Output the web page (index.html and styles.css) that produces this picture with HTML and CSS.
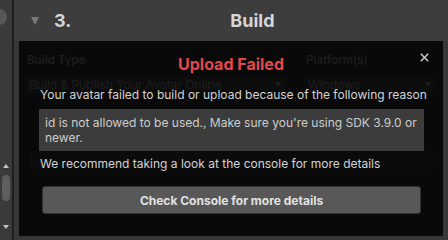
FILE: index.html
```html
<!DOCTYPE html>
<html>
<head>
<meta charset="utf-8">
<link rel="stylesheet" href="styles.css">
</head>
<body>
<div class="app">
  <aside class="scroll">
    <span class="knob"></span>
    <div class="track">
      <span class="arrow up"></span>
      <span class="thumb"></span>
      <span class="arrow down"></span>
    </div>
  </aside>
  <main class="main">
    <header class="section-head">
      <span class="caret"></span>
      <span class="num">3.</span>
      <span class="title">Build</span>
    </header>
    <section class="panel">
      <div class="fields">
        <div class="field">
          <div class="label">Build Type</div>
          <div class="select">Build &amp; Publish Your Avatar Online<span class="chev"></span></div>
        </div>
        <div class="field">
          <div class="label">Platform(s)</div>
          <div class="select">Windows<span class="chev"></span></div>
        </div>
      </div>
      <div class="publish">Build &amp; Publish</div>
      <div class="help"></div>

      <div class="modal">
        <h2 class="modal-title">Upload Failed</h2>
        <button class="close" aria-label="Close">
          <svg width="9" height="9" viewBox="0 0 9 9"><path d="M0.8 0.8 L8.2 8.2 M8.2 0.8 L0.8 8.2" stroke="#d0d0d0" stroke-width="1.4" fill="none"/></svg>
        </button>
        <p class="msg">Your avatar failed to build or upload because of the following reason</p>
        <div class="reason">id is not allowed to be used., Make sure you're using SDK 3.9.0 or newer.</div>
        <p class="msg tip">We recommend taking a look at the console for more details</p>
        <button class="console-btn">Check Console for more details</button>
      </div>
    </section>
  </main>
</div>
</body>
</html>
```

FILE: styles.css
```css
html, body {
  margin: 0;
  padding: 0;
}
body {
  width: 448px;
  height: 240px;
  overflow: hidden;
  background: #383838;
  font-family: Inter, "Noto Sans", sans-serif;
}
.app {
  display: flex;
  width: 448px;
  height: 240px;
}
.scroll {
  width: 12px;
  flex: none;
  background: #3a3a3a;
  border-right: 2px solid #1f1f1f;
  display: flex;
  flex-direction: column;
  position: relative;
  overflow: hidden;
}
.knob {
  position: absolute;
  left: -9px;
  top: 9px;
  width: 16px;
  height: 16px;
  border-radius: 50%;
  background: #575757;
}
.track {
  margin-top: 164px;
  display: flex;
  flex-direction: column;
  align-items: center;
  flex: 1;
  padding-bottom: 11px;
}
.arrow {
  width: 0;
  height: 0;
  border-left: 3.5px solid transparent;
  border-right: 3.5px solid transparent;
}
.arrow.up {
  border-bottom: 4px solid #c4c4c4;
}
.arrow.down {
  border-top: 4px solid #c4c4c4;
  margin-top: auto;
}
.thumb {
  margin-top: 7px;
  width: 8px;
  height: 26px;
  border-radius: 4px;
  background: #5e5e5e;
}
.main {
  flex: 1;
  display: flex;
  flex-direction: column;
  min-width: 0;
}
.section-head {
  height: 41px;
  flex: none;
  background: #3d3d3d;
  display: flex;
  align-items: center;
  padding-left: 17px;
}
.caret {
  width: 0;
  height: 0;
  border-left: 4.5px solid transparent;
  border-right: 4.5px solid transparent;
  border-top: 8px solid #7a7a7a;
  margin-top: 1px;
}
.num, .title {
  font-size: 18px;
  font-weight: 700;
  color: #d6d6d6;
}
.num {
  margin-left: 15px;
}
.title {
  margin-left: 159px;
}
.panel {
  position: relative;
  flex: 1;
  margin: 0 5px 4px 5px;
  background: #383838;
}
.fields {
  display: flex;
  gap: 19px;
  padding: 12px 0 0 6px;
}
.field {
  display: flex;
  flex-direction: column;
}
.field:first-child {
  width: 260px;
}
.field:last-child {
  width: 131px;
}
.label {
  font-size: 11.5px;
  font-weight: 600;
  line-height: 14px;
  color: #acacac;
  padding-left: 2px;
}
.select {
  margin-top: 9px;
  height: 17px;
  background: #4e4e4e;
  border-radius: 3px;
  font-size: 12px;
  line-height: 17px;
  color: #acacac;
  padding-left: 4px;
  display: flex;
  align-items: center;
}
.chev {
  margin-left: auto;
  margin-right: 4px;
  width: 0;
  height: 0;
  border-left: 3.5px solid transparent;
  border-right: 3.5px solid transparent;
  border-top: 5px solid #acacac;
}
.publish {
  margin-top: 31px;
  text-align: center;
  font-size: 15px;
  font-weight: 700;
  color: #acacac;
  line-height: 18px;
}
.help {
  margin: 9px 10px 0 10px;
  height: 18px;
  background: #464646;
}
.modal {
  position: absolute;
  inset: 0;
  background: rgba(0, 0, 0, 0.84);
  padding: 13px 19px 0 21px;
  display: flex;
  flex-direction: column;
}
.modal-title {
  margin: 0;
  text-align: center;
  font-size: 16px;
  line-height: 20px;
  font-weight: 700;
  color: #e2474a;
  margin-left: -2px;
}
.close {
  position: absolute;
  right: 14px;
  top: 12px;
  width: 9px;
  height: 9px;
  padding: 0;
  border: 0;
  background: none;
  display: flex;
}
.msg {
  margin: 13px 0 0 0;
  font-size: 12px;
  line-height: 15px;
  color: #d4d4d4;
  white-space: nowrap;
}
.reason {
  margin: 7px 0 0 -1px;
  padding: 6px 6px;
  background: #3c3c3c;
  font-size: 12px;
  line-height: 15px;
  color: #cdcdcd;
}
.msg.tip {
  margin-top: 5px;
}
.console-btn {
  margin: 15px 3px 0 2px;
  height: 28px;
  background: #585858;
  border: 1px solid #303030;
  border-radius: 3px;
  font-family: Inter, "Noto Sans", sans-serif;
  font-size: 12px;
  font-weight: 700;
  color: #e2e2e2;
  padding: 0;
}
```
